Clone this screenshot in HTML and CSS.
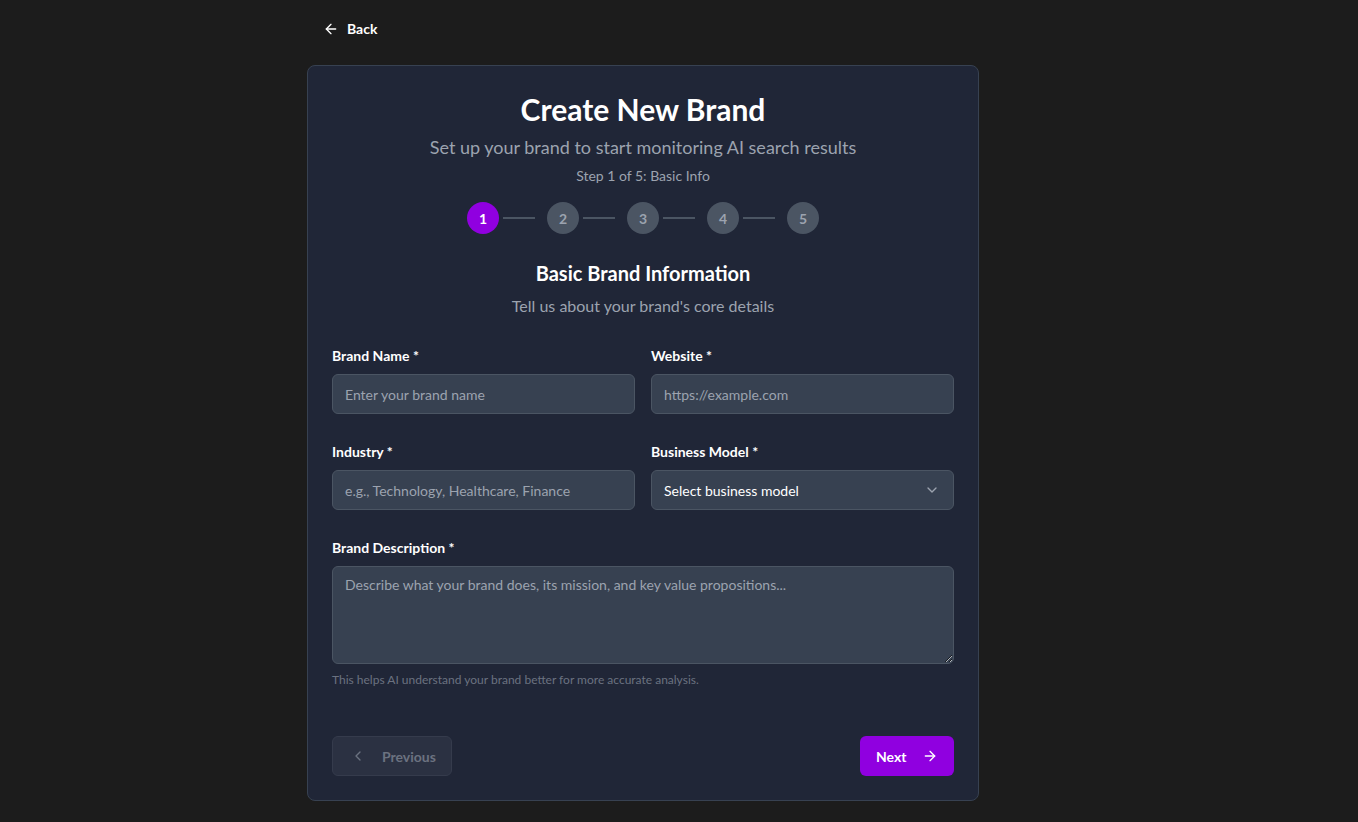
FILE: index.html
```html
<!DOCTYPE html>
<html lang="en">
<head>
    <meta charset="UTF-8">
    <meta name="viewport" content="width=device-width, initial-scale=1.0">
    <title>Create New Brand</title>
    <link rel="stylesheet" href="styles.css">
</head>
<body>
    <div class="page">
        <button class="back-btn">
            <svg width="16" height="16" viewBox="0 0 24 24" fill="none" stroke="currentColor" stroke-width="2" stroke-linecap="round" stroke-linejoin="round"><path d="M19 12H5"/><path d="M12 19l-7-7 7-7"/></svg>
            Back
        </button>

        <div class="card">
            <div class="header">
                <h1>Create New Brand</h1>
                <p class="subtitle">Set up your brand to start monitoring AI search results</p>
                <p class="step-text">Step 1 of 5: Basic Info</p>
            </div>

            <div class="stepper">
                <div class="step active">1</div>
                <div class="step-line"></div>
                <div class="step">2</div>
                <div class="step-line"></div>
                <div class="step">3</div>
                <div class="step-line"></div>
                <div class="step">4</div>
                <div class="step-line"></div>
                <div class="step">5</div>
            </div>

            <div class="section-head">
                <h2>Basic Brand Information</h2>
                <p>Tell us about your brand's core details</p>
            </div>

            <div class="form">
                <div class="form-row">
                    <div class="field">
                        <label>Brand Name *</label>
                        <input type="text" placeholder="Enter your brand name">
                    </div>
                    <div class="field">
                        <label>Website *</label>
                        <input type="text" placeholder="https://example.com">
                    </div>
                </div>
                <div class="form-row">
                    <div class="field">
                        <label>Industry *</label>
                        <input type="text" placeholder="e.g., Technology, Healthcare, Finance">
                    </div>
                    <div class="field">
                        <label>Business Model *</label>
                        <div class="select">
                            <span>Select business model</span>
                            <svg width="16" height="16" viewBox="0 0 24 24" fill="none" stroke="currentColor" stroke-width="2" stroke-linecap="round" stroke-linejoin="round"><path d="M6 9l6 6 6-6"/></svg>
                        </div>
                    </div>
                </div>
                <div class="field">
                    <label>Brand Description *</label>
                    <textarea rows="4" placeholder="Describe what your brand does, its mission, and key value propositions..."></textarea>
                    <p class="hint">This helps AI understand your brand better for more accurate analysis.</p>
                </div>
            </div>

            <div class="actions">
                <button class="prev-btn" disabled>
                    <svg width="16" height="16" viewBox="0 0 24 24" fill="none" stroke="currentColor" stroke-width="2" stroke-linecap="round" stroke-linejoin="round"><path d="M15 18l-6-6 6-6"/></svg>
                    Previous
                </button>
                <button class="next-btn">
                    Next
                    <svg width="16" height="16" viewBox="0 0 24 24" fill="none" stroke="currentColor" stroke-width="2" stroke-linecap="round" stroke-linejoin="round"><path d="M5 12h14"/><path d="M12 5l7 7-7 7"/></svg>
                </button>
            </div>
        </div>
    </div>
</body>
</html>
```

FILE: styles.css
```css
* {
    margin: 0;
    padding: 0;
    box-sizing: border-box;
}

body {
    font-family: Lato, "Noto Sans", sans-serif;
    background: #1c1c1c;
    color: #fff;
    padding: 11px 72px 0 0;
}

.page {
    width: 672px;
    margin: 0 auto;
}

button {
    font-family: inherit;
}

svg {
    flex-shrink: 0;
}

.back-btn {
    display: flex;
    align-items: center;
    gap: 8px;
    background: none;
    border: none;
    color: #fff;
    font-size: 14px;
    font-weight: 700;
    line-height: 20px;
    padding: 8px 16px;
    margin-bottom: 18px;
    cursor: pointer;
}

.card {
    background: #202637;
    border: 1px solid #374151;
    border-radius: 8px;
    padding: 24px;
}

.header {
    text-align: center;
}

.header h1 {
    font-size: 30px;
    line-height: 36px;
    font-weight: 700;
    padding-top: 1px;
}

.subtitle {
    margin-top: 6px;
    font-size: 18px;
    line-height: 28px;
    color: #9ca3af;
}

.step-text {
    margin-top: 5px;
    font-size: 14px;
    line-height: 20px;
    color: #9ca3af;
}

.stepper {
    display: flex;
    justify-content: center;
    align-items: center;
    margin-top: 16px;
}

.step {
    width: 32px;
    height: 32px;
    border-radius: 50%;
    background: #4b5563;
    color: #9ca3af;
    font-size: 14px;
    font-weight: 700;
    display: flex;
    align-items: center;
    justify-content: center;
}

.step.active {
    background: #9000e0;
    color: #fff;
}

.step-line {
    width: 32px;
    height: 2px;
    background: #4b5563;
    margin: 0 12px 0 4px;
}

.section-head {
    text-align: center;
    margin-top: 25px;
}

.section-head h2 {
    font-size: 20px;
    line-height: 28px;
    font-weight: 700;
}

.section-head p {
    margin-top: 7px;
    font-size: 16px;
    line-height: 24px;
    color: #9ca3af;
}

.form {
    margin-top: 28px;
    display: flex;
    flex-direction: column;
    gap: 28px;
}

.form-row {
    display: grid;
    grid-template-columns: 1fr 1fr;
    gap: 16px;
}

.field label {
    display: block;
    font-size: 14px;
    line-height: 20px;
    font-weight: 700;
    margin-bottom: 8px;
}

.field input,
.field textarea,
.select {
    width: 100%;
    background: #374151;
    border: 1px solid #4b5563;
    border-radius: 6px;
    color: #fff;
    font-family: inherit;
    font-size: 14px;
    padding: 0 12px;
}

.field input {
    height: 40px;
}

.field input::placeholder,
.field textarea::placeholder {
    color: #9ca3af;
}

.select {
    height: 40px;
    display: flex;
    align-items: center;
    justify-content: space-between;
}

.select svg {
    color: #9ca3af;
    margin-right: 1px;
}

.field textarea {
    display: block;
    height: 98px;
    padding: 8px 12px;
    line-height: 20px;
    resize: vertical;
}

.hint {
    margin-top: 8px;
    font-size: 12px;
    line-height: 16px;
    color: #6b7280;
}

.actions {
    margin-top: 48px;
    display: flex;
    justify-content: space-between;
}

.prev-btn,
.next-btn {
    height: 40px;
    display: flex;
    align-items: center;
    gap: 16px;
    border-radius: 6px;
    font-size: 14px;
    font-weight: 700;
    padding: 0 16px;
}

.prev-btn {
    background: #2b3142;
    border: 1px solid #353b4c;
    color: #6b7280;
    padding: 0 16px 0 17px;
    width: 120px;
}

.next-btn {
    background: #9000e0;
    border: none;
    color: #fff;
    width: 94px;
    cursor: pointer;
}
```
